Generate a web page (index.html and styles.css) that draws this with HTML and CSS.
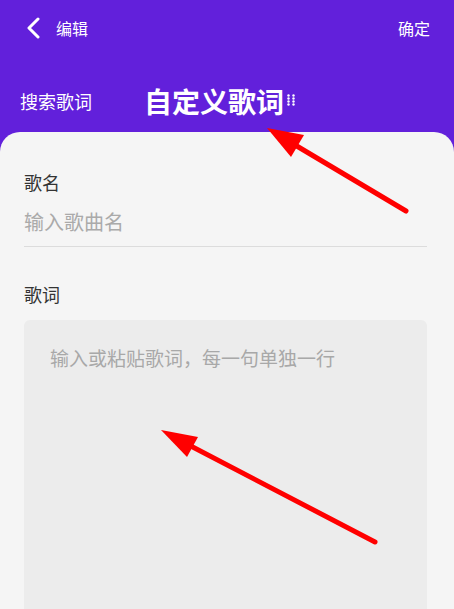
FILE: index.html
```html
<!DOCTYPE html>
<html lang="zh-CN">

<head>
    <meta charset="UTF-8">
    <meta name="viewport" content="width=device-width, initial-scale=1.0">
    <title>编辑歌词</title>
    <link rel="stylesheet" href="styles.css">
</head>

<body>
    <div class="page">
        <div class="top-bar">
            <div class="top-left">
                <svg class="back-icon" width="16" height="22" viewBox="0 0 16 22">
                    <path d="M13 2 L4 11 L13 20" fill="none" stroke="#fff" stroke-width="3" stroke-linecap="round" stroke-linejoin="round" />
                </svg>
                <span class="top-title">编辑</span>
            </div>
            <span class="top-ok">确定</span>
        </div>

        <div class="tabs">
            <span class="tab">搜索歌词</span>
            <span class="tab active">自定义歌词</span>
            <svg class="drag-dots" width="9" height="12" viewBox="0 0 9 12">
                <circle cx="1.5" cy="1.5" r="1.2" fill="#fff" />
                <circle cx="6.5" cy="1.5" r="1.2" fill="#fff" />
                <circle cx="1.5" cy="4.5" r="1.2" fill="#fff" />
                <circle cx="6.5" cy="4.5" r="1.2" fill="#fff" />
                <circle cx="1.5" cy="7.5" r="1.2" fill="#fff" />
                <circle cx="6.5" cy="7.5" r="1.2" fill="#fff" />
                <circle cx="1.5" cy="10.5" r="1.2" fill="#fff" />
                <circle cx="6.5" cy="10.5" r="1.2" fill="#fff" />
            </svg>
        </div>

        <div class="card">
            <div class="field-label">歌名</div>
            <div class="song-input">输入歌曲名</div>

            <div class="field-label lyric-label">歌词</div>
            <div class="lyric-box">
                <span class="lyric-hint">输入或粘贴歌词，每一句单独一行</span>
            </div>
        </div>

        <!-- 标注箭头 -->
        <svg class="marks" width="454" height="609" viewBox="0 0 454 609">
            <line x1="406" y1="211" x2="290" y2="142" stroke="#ff0000" stroke-width="5" stroke-linecap="round" />
            <polygon points="267,128 304,135 291,157" fill="#ff0000" />
            <line x1="375" y1="542" x2="185" y2="443" stroke="#ff0000" stroke-width="5" stroke-linecap="round" />
            <polygon points="161,430 198,437 187,457" fill="#ff0000" />
        </svg>
    </div>
</body>

</html>
```

FILE: styles.css
```css
* {
    box-sizing: border-box;
}

body {
    margin: 0;
    background: #6220db;
    font-family: "Noto Sans CJK SC", "Noto Sans", sans-serif;
}

.page {
    position: relative;
    width: 454px;
    height: 609px;
    overflow: hidden;
}

.top-bar {
    height: 56px;
    padding: 0 24px 0 25px;
    display: flex;
    align-items: center;
    justify-content: space-between;
    color: #fff;
}

.top-left {
    display: flex;
    align-items: center;
}

.back-icon {
    display: block;
}

.top-title {
    margin-left: 15px;
    font-size: 16px;
}

.top-ok {
    font-size: 16px;
}

.tabs {
    height: 76px;
    padding-left: 20px;
    padding-top: 14px;
    display: flex;
    align-items: center;
    color: #fff;
}

.tab {
    font-size: 18px;
}

.tab.active {
    margin-left: 52px;
    font-size: 28px;
    font-weight: bold;
}

.drag-dots {
    display: block;
    margin-left: 3px;
    margin-top: -3px;
}

.card {
    height: 477px;
    background: #f5f5f5;
    border-radius: 20px 20px 0 0;
    padding: 38px 27px 0 24px;
}

.field-label {
    font-size: 18px;
    line-height: 24px;
    color: #333;
}

.song-input {
    margin-top: 14px;
    padding-bottom: 10px;
    font-size: 20px;
    line-height: 28px;
    color: #aaa;
    border-bottom: 1px solid #dcdcdc;
}

.lyric-label {
    margin-top: 35px;
}

.lyric-box {
    margin-top: 14px;
    height: 320px;
    background: #ececec;
    border-radius: 6px;
    padding: 25px 26px;
}

.lyric-hint {
    font-size: 19px;
    line-height: 26px;
    color: #a8a8a8;
}

.marks {
    position: absolute;
    left: 0;
    top: 0;
    pointer-events: none;
}
```
